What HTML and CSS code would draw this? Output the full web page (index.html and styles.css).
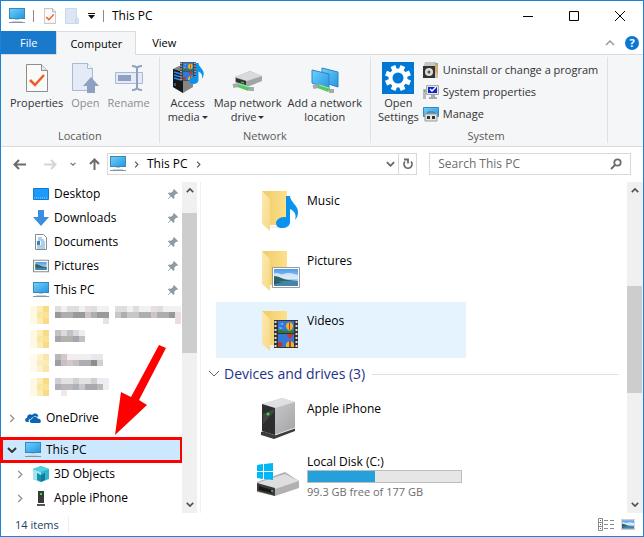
FILE: index.html
```html
<!DOCTYPE html>
<html lang="en">
<head>
  <meta charset="UTF-8">
  <meta name="viewport" content="width=device-width, initial-scale=1.0">
  <title>This PC</title>
  <link rel="stylesheet" href="styles.css">
</head>
<body>
  <!-- shared icons -->
  <svg class="sprite" width="0" height="0" aria-hidden="true">
    <defs>
      <linearGradient id="screen" x1="0" y1="0" x2="1" y2="1">
        <stop offset="0" stop-color="#6fd0fa"/><stop offset="1" stop-color="#2595e4"/>
      </linearGradient>
      <linearGradient id="paper" x1="0" y1="0" x2="1" y2="0">
        <stop offset="0" stop-color="#eecb68"/><stop offset="1" stop-color="#fde08a"/>
      </linearGradient>
      <linearGradient id="flap" x1="0" y1="0" x2="1" y2="1">
        <stop offset="0" stop-color="#fdeab0"/><stop offset="1" stop-color="#f6d987"/>
      </linearGradient>
      <linearGradient id="metal" x1="0" y1="0" x2="1" y2="1">
        <stop offset="0" stop-color="#d4d4d6"/><stop offset="1" stop-color="#a3a3a6"/>
      </linearGradient>
      <linearGradient id="sky" x1="0" y1="0" x2="0" y2="1">
        <stop offset="0" stop-color="#4f9be8"/><stop offset="1" stop-color="#d8ecfa"/>
      </linearGradient>
    </defs>
    <symbol id="i-pc" viewBox="0 0 16 16">
      <rect x="0.5" y="0.5" width="15" height="10" fill="url(#screen)" stroke="#3a87b8"/>
      <path d="M6 11h4v1H6z" fill="#b9c9d3"/>
      <path d="M0 14h16v1H0z" fill="#8297a6"/>
      <path d="M3 13h10v1H3z" fill="#c5d2da"/>
    </symbol>
    <symbol id="i-check" viewBox="0 0 22 28">
      <path d="M0.500 0.500h15l6 6v21h-21z" fill="#fafafa" stroke="#8d8d8d"/>
      <path d="M15.500 0.500v6h6" fill="#e8e8e8" stroke="#8d8d8d"/>
      <path d="M4 16l5 5 9-10" fill="none" stroke="#f15a24" stroke-width="2.500"/>
    </symbol>
    <symbol id="i-folder" viewBox="0 0 48 48">
      <path d="M8 5h25v34H16z" fill="url(#paper)"/>
      <path d="M8 5l8 8v32l-8-7z" fill="url(#flap)"/>
      <path d="M16 40h24l-8 2H17z" fill="#e6e6e6" opacity=".5"/>
    </symbol>
    <symbol id="i-pin" viewBox="0 0 12 12">
      <path d="M7 1l4 4-1 1-1-.2L7.200 8l.2 2-1 1L4 8.600 1.400 11 1 10.600 3.400 8 1 5.600l1-1 2 .2L6.200 3 6 2z" fill="#8f9ba3"/>
    </symbol>
    <symbol id="i-film" viewBox="0 0 24 28">
      <path d="M0 0h24v28H0z" fill="#333"/>
      <path d="M1.500 1v27M22.500 1v27" stroke="#ddd" stroke-width="2" stroke-dasharray="2 2"/>
      <path d="M4 1h16v12H4zM4 14h16v13H4z" fill="#3577d8"/>
      <path d="M4 10h4l4 1 8-1v3H4z" fill="#2d7c35"/>
      <path d="M4 22h3l2 2-2 3H4z" fill="#b03a30"/>
      <path d="M6 4l3-1v2zM5 7l4 1-3 1z" fill="#8fbbf0"/>
      <path d="M12 6a3.500 3.500 0 0 1 7 0c0 2-1 3-2.500 4.500h-2C13 9 12 8 12 6z" fill="#e8ba26"/>
      <path d="M15 3h1v7h-1z" fill="#d22e25"/>
      <path d="M13 14h6c0 2-1 3-2 4h-2c-1-1-2-2-2-4z" fill="#c93a2e"/>
      <path d="M12 25c0-5 8-5 8 0v2h-8z" fill="#e8ba26"/>
      <path d="M15 21h2v6h-2z" fill="#c93a2e"/>
    </symbol>
    <symbol id="i-note" viewBox="0 0 22 32">
      <path d="M10 0h4c0 6 8 9 8 16 0 3-1 6-3 8 2-6-1-9-5-11v13c0 4-4 6-8 6-4 0-6-2-6-5s4-6 8-6l2 .3z" fill="#0a93ec"/>
    </symbol>
    <symbol id="i-photo" viewBox="0 0 28 21">
      <path d="M0.500 0.500h27v20H0.500z" fill="#fff" stroke="#9b9b9b"/>
      <path d="M2 2h24v17H2z" fill="url(#sky)"/>
      <path d="M2 7c4-3 6 2 10 0s7-1 14 1v4H2z" fill="#f3f9fd" opacity=".7"/>
      <path d="M2 9c5 0 8 3 14 4l10 1v1H2z" fill="#2f6559"/>
      <path d="M2 14h24v5H2z" fill="#4384ad"/>
      <path d="M2 14l9 1-9 2z" fill="#265662"/>
    </symbol>
    <symbol id="i-down" viewBox="0 0 10 6">
      <path d="M1 1l4 4 4-4" fill="none" stroke="currentColor" stroke-width="2"/>
    </symbol>
    <symbol id="i-right" viewBox="0 0 6 10">
      <path d="M1 1l4 4-4 4" fill="none" stroke="currentColor" stroke-width="1.600"/>
    </symbol>
    <symbol id="i-up" viewBox="0 0 10 6">
      <path d="M1 5l4-4 4 4" fill="none" stroke="currentColor" stroke-width="2"/>
    </symbol>
  </svg>

  <div class="window">
    <header class="titlebar">
      <svg class="icon16"><use href="#i-pc"/></svg>
      <span class="bar"></span>
      <div class="quick">
        <button aria-label="Properties"><svg width="12" height="16"><use href="#i-check"/></svg></button>
        <button aria-label="New folder"><svg width="14" height="16" viewBox="0 0 14 16"><path d="M0.500 0.500h11v9l2 1v5h-13z" fill="#dde6f4" stroke="#cbd8ec"/><path d="M11 10v5" stroke="#bccbe3"/></svg></button>
        <button aria-label="Customize toolbar"><svg width="7" height="6" viewBox="0 0 7 6"><path d="M0 0h7v1H0zM0 2h7L3.500 6z" fill="#111"/></svg></button>
      </div>
      <span class="bar"></span>
      <h1>This PC</h1>
      <div class="controls">
        <button aria-label="Minimize"><svg width="10" height="10" viewBox="0 0 10 10"><path d="M0 5.500h10" stroke="#000"/></svg></button>
        <button aria-label="Maximize"><svg width="10" height="10" viewBox="0 0 10 10"><path d="M0.500 0.500h9v9h-9z" fill="none" stroke="#000"/></svg></button>
        <button aria-label="Close"><svg width="10" height="10" viewBox="0 0 10 10"><path d="M0 0l10 10M10 0L0 10" stroke="#000"/></svg></button>
      </div>
    </header>

    <nav class="tabs">
      <button class="tab file">File</button>
      <button class="tab active">Computer</button>
      <button class="tab">View</button>
      <div class="tabs-right">
        <button aria-label="Collapse ribbon"><svg width="10" height="6" viewBox="0 0 10 6"><path d="M1 5l4-4 4 4" fill="none" stroke="#999" stroke-width="1.500"/></svg></button>
        <button class="help" aria-label="Help">?</button>
      </div>
    </nav>

    <section class="ribbon">
      <div class="group">
        <div class="tools">
          <button class="tool"><svg width="22" height="28"><use href="#i-check"/></svg><span>Properties</span></button>
          <button class="tool" disabled>
            <svg width="28" height="30" viewBox="0 0 28 30"><path d="M1.500 0.500h15l5 5v22h-20z" fill="#e4ebf6" stroke="#a9b8d4"/><path d="M16.500 0.500v5h5" fill="#f4f7fb" stroke="#a9b8d4"/><path d="M20 14l8 9h-4v7h-8v-7h-4z" fill="#8fa1c3"/></svg>
            <span>Open</span>
          </button>
          <button class="tool" disabled>
            <svg width="28" height="28" viewBox="0 0 28 28"><path d="M0.500 8.500h27v11h-27z" fill="#e4ebf6" stroke="#a9b8d4"/><path d="M3 11h13v6H3z" fill="#8fa1c3"/><path d="M17 2c3 0 5 1 5 3v18c0 2-2 3-5 3M27 2c-3 0-5 1-5 3M22 23c0 2 2 3 5 3" fill="none" stroke="#8fa1c3" stroke-width="2"/></svg>
            <span>Rename</span>
          </button>
        </div>
        <h2>Location</h2>
      </div>

      <div class="group network">
        <div class="tools">
          <button class="tool">
            <svg width="32" height="32" viewBox="0 0 32 32">
              <path d="M1 7l6-3 14 3v18l-10 6-10-6z" fill="#858585"/><path d="M1 7l10 3v21L1 25z" fill="#171717"/><path d="M2 10l7 2M2 13l7 2M2 16l7 2" stroke="#298bf1" stroke-width="1.500"/><path d="M3 21v3" stroke="#40a0ff"/>
              <svg x="8" y="0" width="16" height="19"><use href="#i-film"/></svg>
              <svg x="17" y="1" width="15" height="21"><use href="#i-note"/></svg>
            </svg>
            <span>Access<br>media<i class="drop"></i></span>
          </button>
          <button class="tool">
            <svg width="32" height="32" viewBox="0 0 32 32">
              <path d="M3 15l15-6 12 5v5l-15 6-12-5z" fill="#a2a4a6"/><path d="M3 15l15-6 12 5-15 5z" fill="#d9dadb"/><path d="M4 16l10 3v4L4 20z" fill="#303234"/><path d="M9 20l3 1" stroke="#68d466"/>
              <path d="M1 24l5-1M17 27h5" stroke="#a9a9a9" stroke-width="4"/><path d="M6 23l11 4" stroke="#55c765" stroke-width="4"/><path d="M7 22l10 3" stroke="#a4e4a9"/>
            </svg>
            <span>Map network<br>drive<i class="drop"></i></span>
          </button>
          <button class="tool">
            <svg width="32" height="32" viewBox="0 0 32 32">
              <path d="M13 6l16 4v15l-16-5z" fill="url(#screen)" stroke="#2a86c4"/><path d="M3 8l17 4v15L3 21z" fill="url(#screen)" stroke="#2a86c4"/>
              <path d="M4 25l5-1M20 29h5" stroke="#a9a9a9" stroke-width="4"/><path d="M9 24l11 4" stroke="#55c765" stroke-width="4"/><path d="M10 23l10 3" stroke="#a4e4a9"/>
            </svg>
            <span>Add a network<br>location</span>
          </button>
        </div>
        <h2>Network</h2>
      </div>

      <div class="group system">
        <div class="tools">
          <button class="tool">
            <svg width="32" height="32" viewBox="0 0 32 32">
              <path d="M0 0h32v32H0z" fill="#0078d7"/>
              <g stroke="#fff" stroke-width="5"><path d="M16 3v26M3 16h26" transform="rotate(22 16 16)"/><path d="M16 3v26M3 16h26" transform="rotate(67 16 16)"/></g>
              <circle cx="16" cy="16" r="7.500" fill="#0078d7" stroke="#fff" stroke-width="4"/>
            </svg>
            <span>Open<br>Settings</span>
          </button>
          <div class="links">
            <button>
              <svg width="16" height="16" viewBox="0 0 16 16"><path d="M2 0h11l2 4v12H1V3z" fill="#c9c7bd"/><path d="M12 2l3 3v8l-4-5z" fill="#e2a66a"/><path d="M11 1h4v4z" fill="#8cb987"/><path d="M0 4h12v12H0z" fill="#333"/><circle cx="6" cy="10" r="4" fill="#ddd"/><circle cx="6" cy="10" r="1.500" fill="#555"/></svg>
              Uninstall or change a program
            </button>
            <button>
              <svg width="16" height="16" viewBox="0 0 16 16"><path d="M0 5h3v10H0z" fill="#b8babb"/><path d="M1 6h1v2H1z" fill="#28c840"/><path d="M3.500 1.500h12v9h-12z" fill="#e4e4e4" stroke="#aaa"/><path d="M5 3h9v6H5z" fill="#1026c8"/><path d="M7 5l2 2 4-4" fill="none" stroke="#fff" stroke-width="1.500"/><path d="M8 11h4v2h2v2H6v-2h2z" fill="#aaa"/></svg>
              System properties
            </button>
            <button>
              <svg width="16" height="16" viewBox="0 0 16 16"><path d="M0.500 1.500h15v9h-15z" fill="url(#screen)" stroke="#3a87b8"/><path d="M5 8V6h6v2" fill="none" stroke="#666"/><path d="M2 8h12v7H2z" fill="#e5e5e5" stroke="#999"/><path d="M4 10h3v3H4zM9 10h3v3H9z" fill="#333"/></svg>
              Manage
            </button>
          </div>
        </div>
        <h2>System</h2>
      </div>
    </section>

    <div class="address-row">
      <div class="history">
        <button aria-label="Back"><svg width="13" height="11" viewBox="0 0 13 11"><path d="M13 5.500H2M6 1L1.500 5.500 6 10" fill="none" stroke="#6c6c6c" stroke-width="2"/></svg></button>
        <button aria-label="Forward"><svg width="13" height="11" viewBox="0 0 13 11"><path d="M0 5.500h11M7 1l4.500 4.500L7 10" fill="none" stroke="#d5d5d5" stroke-width="2"/></svg></button>
        <button class="recent" aria-label="Recent locations"><svg width="6" height="4"><use href="#i-down"/></svg></button>
        <button aria-label="Up"><svg width="11" height="12" viewBox="0 0 11 12"><path d="M5.500 12V2M1 6l4.500-4.500L10 6" fill="none" stroke="#6c6c6c" stroke-width="2"/></svg></button>
      </div>
      <div class="address">
        <svg class="icon16"><use href="#i-pc"/></svg>
        <svg class="crumb" width="5" height="7"><use href="#i-right"/></svg>
        <a href="#">This PC</a>
        <svg class="crumb" width="5" height="7"><use href="#i-right"/></svg>
        <button class="expand" aria-label="Previous locations"><svg width="9" height="6"><use href="#i-down"/></svg></button>
        <button class="refresh" aria-label="Refresh"><svg width="10" height="12" viewBox="0 0 10 12"><path d="M2 3.500A4 4 0 1 0 8 3.500" fill="none" stroke="#6c6c6c" stroke-width="1.800"/><path d="M1 1.500h4v4" fill="none" stroke="#6c6c6c" stroke-width="1.800"/></svg></button>
      </div>
      <div class="search">
        <input type="text" placeholder="Search This PC" aria-label="Search This PC">
        <svg width="12" height="12" viewBox="0 0 12 12"><circle cx="7.500" cy="4.500" r="3.200" fill="none" stroke="#6c6c6c" stroke-width="1.800"/><path d="M5 7l-4 4" stroke="#6c6c6c" stroke-width="2"/></svg>
      </div>
    </div>

    <main>
      <aside class="sidebar">
        <div class="tree">
          <ul class="quick-access">
            <li><a href="#"><svg class="icon16" viewBox="0 0 16 16"><path d="M0.500 2.500h15v11h-15z" fill="#1a9bff" stroke="#1479c8"/><path d="M1 12h14" stroke="#8fd0ff" stroke-dasharray="1 1"/></svg>Desktop</a><svg class="pin"><use href="#i-pin"/></svg></li>
            <li><a href="#"><svg class="icon16" viewBox="0 0 16 16"><path d="M5 0h6v7h5l-8 9-8-9h5z" fill="#3b8ede"/></svg>Downloads</a><svg class="pin"><use href="#i-pin"/></svg></li>
            <li><a href="#"><svg class="icon16" viewBox="0 0 16 16"><path d="M2.500 0.500h8l3 3v12h-11z" fill="#fff" stroke="#8c8c8c"/><path d="M5 4h4M5 6h6M8 8h4M8 10h4M4 12h8M4 14h8" stroke="#58a0d8"/><path d="M4 7h3v4H4z" fill="#3b85bf"/></svg>Documents</a><svg class="pin"><use href="#i-pin"/></svg></li>
            <li><a href="#"><svg class="icon16" viewBox="0 0 28 28"><g transform="translate(0 3)"><path d="M1 1h26v20H1z" fill="#fff" stroke="#8c8c8c" stroke-width="2"/><path d="M4 4h20v14H4z" fill="url(#sky)"/><path d="M4 8c7 0 9 4 20 5v2H4z" fill="#2f6559"/><path d="M4 14h20v4H4z" fill="#4384ad"/></g></svg>Pictures</a><svg class="pin"><use href="#i-pin"/></svg></li>
            <li><a href="#"><svg class="icon16"><use href="#i-pc"/></svg>This PC</a><svg class="pin"><use href="#i-pin"/></svg></li>
          </ul>
          <!-- pixelated folder names -->
          <svg class="mosaic" width="152" height="96" viewBox="0 0 152 96" shape-rendering="crispEdges">
            <g id="m-folder">
              <path d="M0 4h7v18H0z" fill="#fff9e3"/><path d="M7 4h6v18H7z" fill="#fbedb8"/><path d="M13 4h6v18h-6z" fill="#fadb85"/><path d="M7 10h6v6H7z" fill="#f9e7a5"/><path d="M13 10h6v6h-6z" fill="#fce394"/>
            </g>
            <use href="#m-folder" y="24"/><use href="#m-folder" y="48" opacity=".7"/><use href="#m-folder" y="72"/>
            <path d="M25 4h6v6h-6zM37 4h12v6H37zM61 4h6v6h-6zM85 4h12v6H85zM103 4h6v6h-6zM127 4h6v6h-6z" fill="#dedede"/>
            <path d="M31 4h6v6h-6zM49 4h12v6H49zM67 4h12v6H67zM97 4h6v6h-6zM109 4h12v6h-12zM133 4h18v6h-18z" fill="#f0f1f3"/>
            <path d="M55 4h6v6h-6zM121 4h6v6h-6zM145 10h6v12h-6z" fill="#eadede"/>
            <path d="M25 10h6v6h-6zM43 10h12v6H43zM67 10h12v6H67zM139 10h6v6h-6z" fill="#999"/>
            <path d="M31 10h12v6H31zM61 10h6v6h-6zM91 10h6v6h-6zM109 10h12v6h-12zM127 10h12v6h-12z" fill="#aeadaf"/>
            <path d="M55 10h6v6h-6zM85 10h6v6h-6zM97 10h12v6H97zM121 10h6v6h-6z" fill="#c9c6c8"/>
            <path d="M73 16h6v6h-6z" fill="#e4e4e4"/>
            <path d="M25 28h6v6h-6zM37 28h6v6h-6zM49 34h6v6h-6z" fill="#c2c0c6"/><path d="M31 28h6v6h-6zM43 28h6v6h-6z" fill="#dadada"/><path d="M49 28h6v6h-6z" fill="#e8f0f6"/><path d="M25 34h6v6h-6zM43 34h6v6h-6z" fill="#a5a6ad"/><path d="M31 34h12v6H31z" fill="#b5b0b0"/>
            <path d="M25 52h6v6h-6z" fill="#b8b8b8"/><path d="M31 52h6v6h-6zM37 58h6v6h-6z" fill="#d6c8ca"/><path d="M37 52h24v6H37z" fill="#efefef"/><path d="M61 52h12v6H61z" fill="#e5e9ec"/><path d="M25 58h6v6h-6z" fill="#a29da0"/><path d="M31 58h6v6h-6zM43 58h6v6h-6z" fill="#c3c1c5"/><path d="M49 58h12v6H49z" fill="#adacb4"/><path d="M61 58h6v6h-6z" fill="#8f8c8c"/><path d="M67 58h6v6h-6z" fill="#d0d0d0"/>
            <path d="M25 76h6v6h-6zM43 76h6v6h-6zM61 76h6v6h-6z" fill="#cfcfd2"/><path d="M31 76h12v6H31zM49 76h12v6H49z" fill="#e2e2e2"/><path d="M67 76h12v12H67z" fill="#eceef1"/><path d="M25 82h6v6h-6zM43 82h6v6h-6z" fill="#aeb0b8"/><path d="M31 82h12v6H31zM67 82h6v6h-6z" fill="#bcb8ba"/><path d="M49 82h6v6h-6z" fill="#c8c8cc"/><path d="M55 82h12v6H55z" fill="#aaa8ac"/><path d="M31 88h6v6h-6z" fill="#eaeaea"/>
          </svg>
          <ul class="roots">
            <li><svg class="twist"><use href="#i-right"/></svg><a href="#"><svg class="icon16" viewBox="0 0 16 16"><path d="M4 12H2c-3-1-2-4 0-4 0-3 3-5 5-3 3-3 7-1 6 2-3-2-6 0-7 2-2 0-3 1-2 3z" fill="#0a64b8"/><path d="M7 13c-3 0-3-4 0-4 1-3 5-3 6 0 3-1 4 4 1 4z" fill="#0a64b8"/></svg>OneDrive</a></li>
            <li class="selected"><svg class="twist open"><use href="#i-down"/></svg><a href="#"><svg class="icon16"><use href="#i-pc"/></svg>This PC</a></li>
          </ul>
          <ul class="children">
            <li><svg class="twist"><use href="#i-right"/></svg><a href="#"><svg class="icon16" viewBox="0 0 16 16"><path d="M8 0l8 3v10l-8 3-8-3V3z" fill="#2fb5d0"/><path d="M0 3l8 3v10l-8-3z" fill="#a4e3ef"/><path d="M0 3l8-3 8 3-8 3z" fill="#57cfe3"/><path d="M4 7l4 2v7l-4-2z" fill="#178fae"/><path d="M8 9l4-2v7l-4 2z" fill="#0f7c9c"/></svg>3D Objects</a></li>
            <li><svg class="twist"><use href="#i-right"/></svg><a href="#"><svg class="icon16" viewBox="0 0 16 16"><path d="M5 1h6v12H5z" fill="#3a3a3a"/><path d="M7 3h2v2H7z" fill="#2fe045"/><path d="M4 14h8v2H4z" fill="#555"/></svg>Apple iPhone</a></li>
          </ul>
        </div>
        <div class="scrollbar">
          <button aria-label="Scroll up"><svg width="8" height="5"><use href="#i-up"/></svg></button>
          <div class="track"><div class="thumb" style="margin-top: 14px; height: 47%"></div></div>
          <button aria-label="Scroll down"><svg width="8" height="5"><use href="#i-down"/></svg></button>
        </div>
        <svg class="pointer" width="54" height="92" viewBox="114 344 54 92" aria-hidden="true"><path d="M159 345l7 3-27 52 8 5-32 30 6-43 10 5z" fill="#f00"/></svg>
      </aside>

      <section class="content">
        <div class="items">
          <a class="tile" href="#">
            <svg class="icon48" viewBox="0 0 48 48"><use href="#i-folder"/><svg x="22" y="10" width="22" height="32"><use href="#i-note"/></svg></svg>
            <span>Music</span>
          </a>
          <a class="tile" href="#">
            <svg class="icon48" viewBox="0 0 48 48"><use href="#i-folder"/><svg x="18" y="21" width="28" height="21"><use href="#i-photo"/></svg></svg>
            <span>Pictures</span>
          </a>
          <a class="tile hover" href="#">
            <svg class="icon48" viewBox="0 0 48 48"><use href="#i-folder"/><svg x="20" y="14" width="24" height="28"><use href="#i-film"/></svg></svg>
            <span>Videos</span>
          </a>
          <h2 class="section"><svg width="12" height="8" viewBox="0 0 12 8"><path d="M1 1l5 5 5-5" fill="none" stroke="#666"/></svg>Devices and drives (3)</h2>
          <a class="tile" href="#">
            <svg class="icon48" viewBox="0 0 48 48"><path d="M7 38l14-4 20-1v4L20 45 7 41z" fill="#3b3b3b"/><path d="M8 10l20-6 13 4v26l-21 7-12-4z" fill="url(#metal)"/><path d="M8 10l20-6 13 4-20 6z" fill="#e0e0e2"/><path d="M8 10l13 4v27L8 37z" fill="#2e2e2e"/><path d="M9 20l11-5v3L9 30z" fill="#444"/><path d="M21 41l20-7" stroke="#eee"/><circle cx="14" cy="20" r="1.500" fill="#35e035"/></svg>
            <span>Apple iPhone</span>
          </a>
          <a class="tile" href="#">
            <svg class="icon48" viewBox="0 0 48 48"><path d="M3 28l28-10 14 9v7L21 42 3 38z" fill="#b1b1b4"/><path d="M3 29l28-9 14 7-24 8z" fill="#dedee0"/><path d="M3 29l18 5v8L3 37z" fill="#3a3a3a"/><path d="M5 32l13 4v3L5 36z" fill="#171717"/><circle cx="18" cy="37" r="1" fill="#35e035"/><path d="M3 11l6-1v7H3zM10 10l9-1v8h-9zM3 18h6v7l-6-1zM10 18h9v8l-9-1z" fill="#00b8f5"/></svg>
            <div class="drive">
              <span>Local Disk (C:)</span>
              <div class="usage"><div style="width: 44%"></div></div>
              <small>99.3 GB free of 177 GB</small>
            </div>
          </a>
        </div>
        <div class="scrollbar">
          <button aria-label="Scroll up"><svg width="8" height="5"><use href="#i-up"/></svg></button>
          <div class="track"><div class="thumb" style="margin-top: 87px; height: 36%"></div></div>
          <button aria-label="Scroll down"><svg width="8" height="5"><use href="#i-down"/></svg></button>
        </div>
      </section>
    </main>

    <footer class="status">
      <span>14 items</span>
      <div class="views">
        <button aria-label="Details view"><svg width="16" height="13" viewBox="0 0 16 13"><path d="M0.500 0.500h4v12h-4zM0 4.500h5M0 8.500h5" fill="#fff" stroke="#8b8b8b"/><path d="M6 2.500h4M12 2.500h4M6 6.500h4M12 6.500h4M6 10.500h4M12 10.500h4" stroke="#8b8b8b"/><path d="M2 2h1v1H2zM2 6h1v1H2z" fill="#36c"/><path d="M2 10h1v1H2z" fill="#c33"/></svg></button>
        <button aria-label="Large icons view"><svg width="14" height="11"><use href="#i-photo"/></svg></button>
      </div>
    </footer>
  </div>
</body>
</html>
```
FILE: styles.css
```css
* {
  box-sizing: border-box;
}

body {
  margin: 0;
  font-family: "Open Sans", "Noto Sans", sans-serif;
  font-size: 12px;
  line-height: 16px;
  color: #000;
  background: #fff;
}

button {
  display: flex;
  align-items: center;
  justify-content: center;
  padding: 0;
  border: none;
  background: none;
  font: inherit;
  color: inherit;
}

a {
  color: inherit;
  text-decoration: none;
}

ul {
  margin: 0;
  padding: 0;
  list-style: none;
}

h1, h2 {
  margin: 0;
  font-size: 12px;
  font-weight: normal;
}

svg {
  flex: none;
}

.sprite {
  position: absolute;
}

.icon16 {
  width: 16px;
  height: 16px;
}

.window {
  display: flex;
  flex-direction: column;
  min-height: 100vh;
  border: 1px solid #1883d7;
}

/* title bar */
.titlebar {
  display: flex;
  align-items: center;
  gap: 8px;
  height: 30px;
  padding-left: 8px;
}

.bar {
  width: 1px;
  height: 12px;
  background: #8a8a8a;
}

.quick {
  display: flex;
  gap: 9px;
  padding-left: 2px;
}

.controls {
  display: flex;
  margin-left: auto;
}

.controls button {
  width: 46px;
  height: 30px;
}

/* tabs */
.tabs {
  display: flex;
  height: 23px;
  font-size: 11px;
}

.tab {
  padding: 0 16px;
}

.tab.file {
  padding: 0 19px;
  background: #1979ca;
  color: #fff;
}

.tab.active {
  height: 24px;
  padding: 0 13px;
  border: 1px solid #dadbdc;
  border-bottom: none;
  background: #f5f6f7;
  z-index: 1;
}

.tabs-right {
  display: flex;
  align-items: center;
  gap: 10px;
  margin-left: auto;
  padding-right: 4px;
}

.help {
  width: 14px;
  height: 14px;
  border-radius: 50%;
  background: #0a78d0;
  color: #fff;
  font-weight: bold;
}

/* ribbon */
.ribbon {
  display: flex;
  height: 93px;
  padding: 2px 0 3px;
  border-top: 1px solid #dadbdc;
  border-bottom: 1px solid #dadbdc;
  background: #f5f6f7;
  color: #333;
  font-size: 11px;
  line-height: 14px;
}

.tabs .active {
  position: relative;
}

.group {
  display: flex;
  flex-direction: column;
  justify-content: space-between;
  padding: 5px 5px 0;
  border-right: 1px solid #e0e1e2;
}

.group h2 {
  font-size: 11px;
  color: #5a5a5a;
  text-align: center;
}

.tools {
  display: flex;
}

.tool {
  flex-direction: column;
  justify-content: flex-start;
  padding: 0 4px;
}

.network .tool {
  padding: 0 3px;
}

.system {
  padding-right: 9px;
  padding-left: 3px;
}

.tool > svg {
  height: 32px;
  margin-bottom: 2px;
}

.tool:disabled {
  color: #8d8d8d;
}

.drop {
  display: inline-block;
  margin: 0 0 2px 2px;
  border: 3px solid transparent;
  border-top-color: #333;
  border-bottom: none;
}

.links {
  margin-top: -3px;
}

.links button {
  height: 22px;
  gap: 4px;
}

/* address bar */
.address-row {
  display: flex;
  gap: 12px;
  padding: 6px 12px 7px;
}

.history {
  display: flex;
  gap: 18px;
  margin-right: -5px;
  color: #777;
}

.recent {
  margin: 0 -5px;
}

.address {
  display: flex;
  flex: 5;
  align-items: center;
  height: 22px;
  padding-left: 2px;
  border: 1px solid #d9d9d9;
}

.crumb {
  margin: 0 8px;
  color: #555;
}

.expand {
  margin: 0 3px 0 auto;
  color: #666;
}

.refresh {
  width: 18px;
  height: 20px;
  border-left: 1px solid #d9d9d9;
}

.search {
  display: flex;
  flex: 3;
  align-items: center;
  padding: 0 8px;
  border: 1px solid #d9d9d9;
}

.search input {
  flex: 1;
  min-width: 0;
  padding: 0;
  border: none;
  outline: none;
  font: inherit;
}

.search input::placeholder {
  color: #6d6d6d;
}

/* body */
main {
  display: flex;
  flex: 1;
}

.sidebar {
  position: relative;
  display: flex;
  width: 200px;
  padding-right: 3px;
  border-right: 1px solid #f0f0f0;
}

.tree {
  flex: 1;
}

.tree li {
  display: flex;
  align-items: center;
  height: 24px;
}

.tree a {
  display: flex;
  flex: 1;
  align-items: center;
  gap: 5px;
}

.quick-access li {
  padding: 0 3px 0 32px;
}

.pin {
  width: 12px;
  height: 12px;
}

.mosaic {
  display: block;
  margin-left: 29px;
}

.roots li {
  margin: 8px 0;
  padding-left: 6px;
}

.roots .selected {
  margin-bottom: 0;
  background: #cce8ff;
  outline: 3px solid #f00;
  outline-offset: -2px;
}

.twist {
  width: 10px;
  height: 9px;
  margin-right: 8px;
  color: #999;
}

.twist.open {
  height: 6px;
  color: #333;
}

.children li {
  padding-left: 14px;
}

.pointer {
  position: absolute;
  top: 162px;
  left: 113px;
}

.scrollbar {
  display: flex;
  flex-direction: column;
  width: 16px;
  background: #f0f0f0;
  color: #505050;
}

.scrollbar button {
  height: 17px;
}

.track {
  flex: 1;
}

.thumb {
  width: 15px;
  background: #cdcdcd;
}

.content {
  display: flex;
  flex: 1;
}

.items {
  flex: 1;
  padding: 0 8px 3px 7px;
}

.tile {
  display: flex;
  gap: 5px;
  width: 250px;
  height: 56px;
  margin: 0 0 4px 8px;
  padding: 4px 4px 4px 38px;
}

.tile > span {
  margin-top: 7px;
}

.tile.hover {
  margin-bottom: 0;
  background: #e5f3ff;
}

.icon48 {
  width: 48px;
  height: 48px;
}

.section {
  display: flex;
  align-items: center;
  gap: 4px;
  height: 32px;
  font-size: 14px;
  color: #1e3287;
}

.section::after {
  content: "";
  flex: 1;
  height: 1px;
  margin-left: 3px;
  background: #e2e2e2;
}

.drive {
  flex: 1;
  line-height: 15px;
}

.drive span,
.drive small {
  display: block;
  font-size: 12px;
}

.drive small {
  margin-top: 1px;
  font-size: 11px;
  color: #6d6d6d;
}

.usage {
  height: 13px;
  margin-top: 1px;
  border: 1px solid #bcbcbc;
  background: #e6e6e6;
}

.usage div {
  height: 100%;
  background: #26a0da;
}

/* status bar */
.status {
  display: flex;
  align-items: center;
  justify-content: space-between;
  height: 23px;
  padding: 0 8px 0 14px;
  font-size: 11px;
  color: #1e3c64;
}

.status span {
  padding-right: 9px;
  border-right: 1px solid #eee;
}

.views {
  display: flex;
  gap: 7px;
}
```
